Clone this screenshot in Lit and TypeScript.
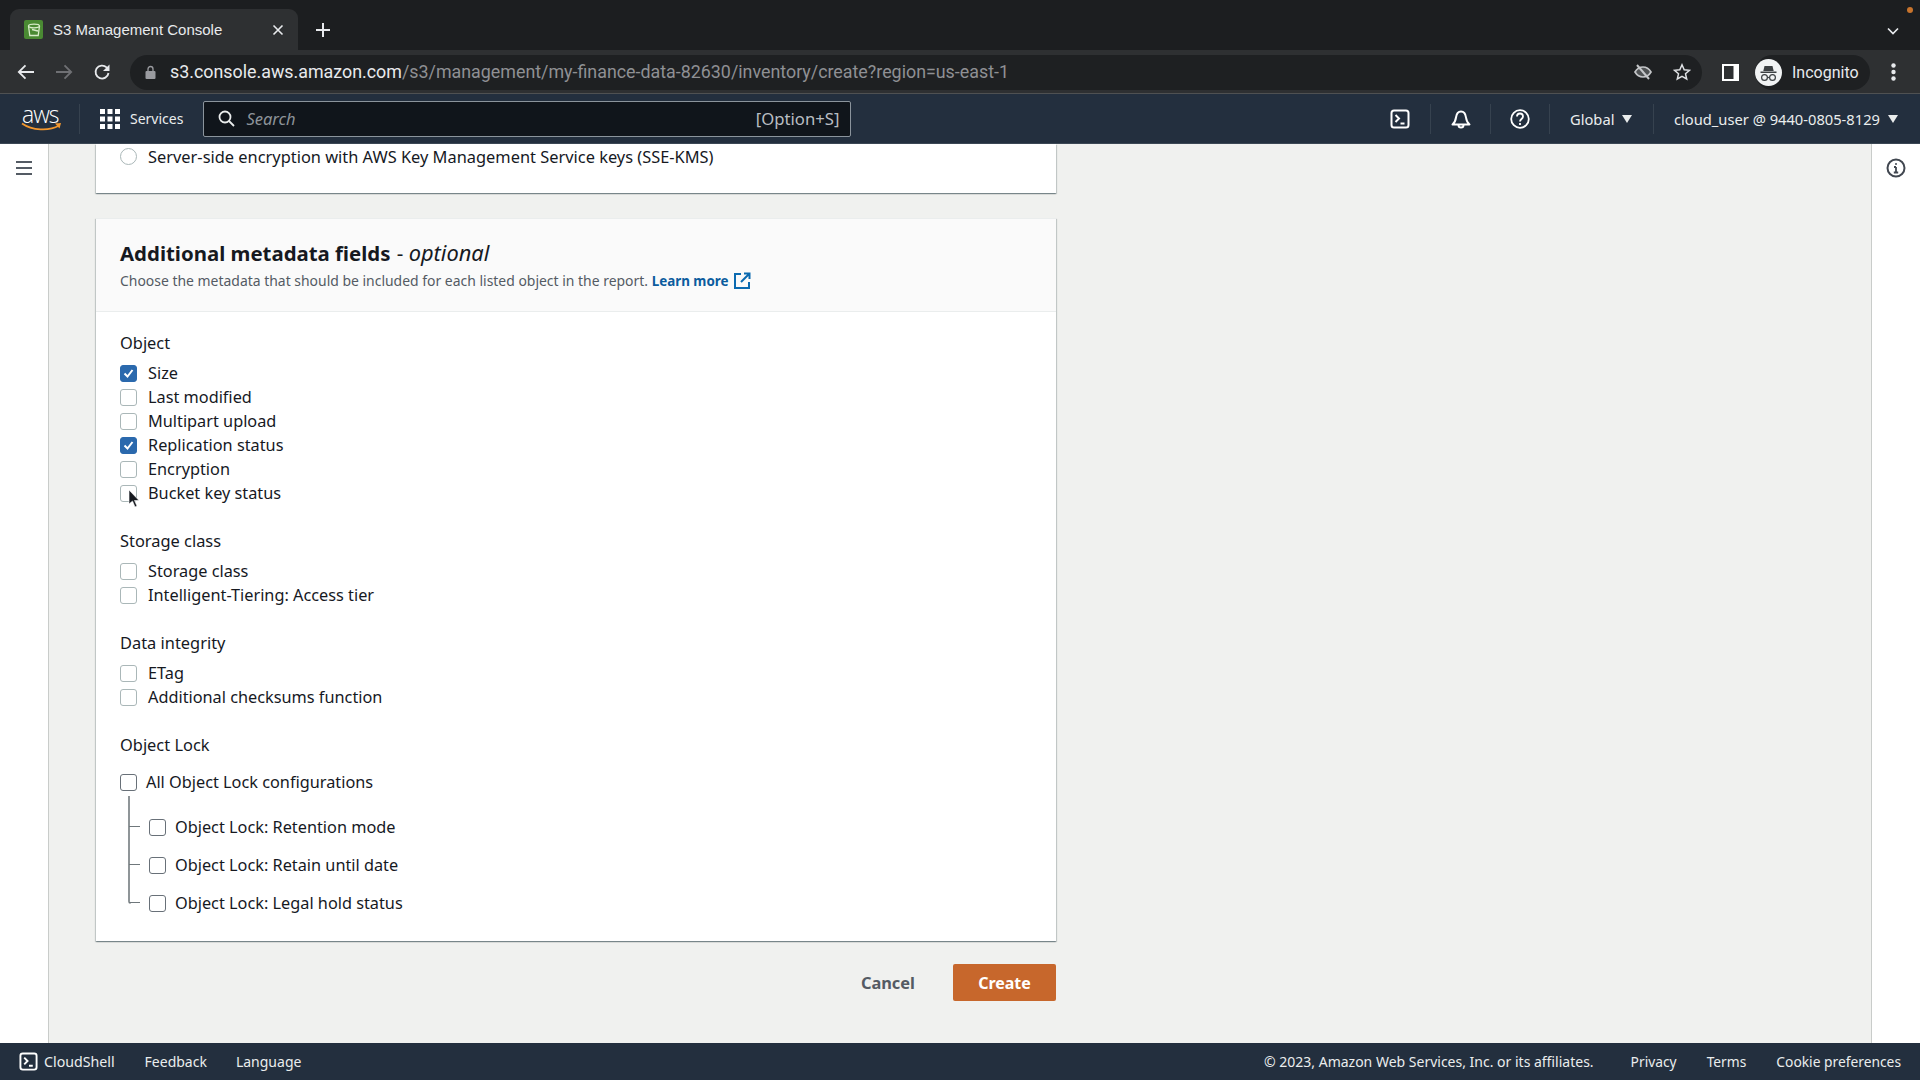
import { LitElement, html, css, svg } from "lit";
import { customElement } from "lit/decorators.js";

const groups = [
  { title: "Object", rows: [["Size", true], ["Last modified", false], ["Multipart upload", false], ["Replication status", true], ["Encryption", false], ["Bucket key status", false]] },
  { title: "Storage class", rows: [["Storage class", false], ["Intelligent-Tiering: Access tier", false]] },
  { title: "Data integrity", rows: [["ETag", false], ["Additional checksums function", false]] },
];
const lockRows = ["Object Lock: Retention mode", "Object Lock: Retain until date", "Object Lock: Legal hold status"];

const shell = (s: number) => html`<svg width=${s} height=${s} viewBox="0 0 20 20" fill="none" stroke="#fff" stroke-width="2"><rect x="1.500" y="1.500" width="17" height="17" rx="2.500"/><path d="M5.500 6l3.500 3.500-3.500 3.500M10.500 14.500h4"/></svg>`;

@customElement("app-root")
export class AppRoot extends LitElement {
  static styles = css`
    :host { display: flex; flex-direction: column; height: 1080px; width: 1920px; overflow: hidden; position: relative;
      font-family: "Noto Sans", "Liberation Sans", sans-serif; color: #16191f; background: #f0f1ef; }
    svg { display: block; flex: none; }
    .tabstrip { height: 50px; background: #1c1e20; display: flex; align-items: flex-end; position: relative; flex: none; }
    .tab { margin-left: 10px; width: 288px; height: 41px; background: #2e3032; border-radius: 9px 9px 0 0; display: flex; align-items: center; padding-left: 14px; box-sizing: border-box; color: #e8eaed; font: 15px "Liberation Sans", sans-serif; }
    .favicon { width: 19px; height: 19px; background: #4a8a33; border-radius: 2px; display: flex; align-items: center; justify-content: center; margin-right: 10px; }
    .tab .x { margin-left: 50px; }
    .plus { margin-left: 17px; align-self: flex-end; margin-bottom: 12px; }
    .strip-chev { position: absolute; left: 1887px; top: 27px; }
    .dot { position: absolute; left: 1907px; top: 7px; width: 6px; height: 6px; border-radius: 50%; background: #c8742c; }
    .toolbar { height: 44px; background: #2e3032; border-bottom: 1px solid #4f5152; box-sizing: border-box; padding: 1px 0 0 7px; display: flex; align-items: center; flex: none; }
    .tb-btn { width: 38px; display: flex; justify-content: center; }
    .omni { margin-left: 9px; width: 1572px; height: 35px; border-radius: 18px; background: #1e2022; display: flex; align-items: center; padding-left: 15px; box-sizing: border-box; font: 17.85px/33px Roboto, sans-serif; color: #8f9094; }
    .omni b { font-weight: 400; color: #e8eaed; }
    .omni .url { margin-bottom: 2px; }
    .omni .lock { margin-right: 14px; }
    .omni .spacer { flex: 1; }
    .omni .eye { margin-right: 21px; }
    .omni .star { margin-right: 11px; }
    .panel-ic { margin-left: 20px; }
    .chip { margin-left: 16px; width: 115px; height: 35px; border-radius: 18px; background: #1e2022; display: flex; align-items: center; color: #e8eaed; font: 16px Roboto, sans-serif; box-sizing: border-box; gap: 10px; }
    .avatar { width: 27px; height: 27px; }
    .kebab { margin-left: 21px; }
    .nav { height: 49px; background: #232f3e; display: flex; align-items: center; color: #eaeded; font-size: 14px; flex: none; position: relative; }
    .logo { width: 38px; margin-left: 22px; position: relative; height: 26px; color: #fff; }
    .logo span { display: block; font: 300 23px/17px "Open Sans", sans-serif; letter-spacing: -1px; }
    .logo svg { position: absolute; left: -1px; top: 16px; }
    .vd { width: 1px; height: 30px; background: #36424f; flex: none; }
    .vd.first { margin-left: 19px; }
    .grid { margin: 0 10px 0 20px; }
    .search { margin-left: 20px; width: 648px; height: 36px; background: #10151b; border: 1px solid #8b949c; border-radius: 2px; box-sizing: border-box; display: flex; align-items: center; padding: 0 11px 0 14px; color: #8d9399; }
    .search i { margin-left: 11px; flex: 1; font-size: 16.5px; }
    .search span { font-size: 16.7px; color: #b8bdc2; }
    .nav-right { margin-left: auto; display: flex; align-items: center; height: 30px; }
    .nslot { display: flex; align-items: center; justify-content: center; height: 30px; }
    .nslot.txt { justify-content: flex-start; padding-left: 20px; box-sizing: border-box; }
    .w60 { width: 60px; } .w59 { width: 59px; } .w58 { width: 58px; } .w103 { width: 103px; } .w243 { width: 243px; }
    .end { width: 23px; }
    .nav-txt { font-size: 14.7px; color: #eaeded; white-space: nowrap; }
    .nav-txt.svc { font-size: 14px; }
    .tri { width: 0; height: 0; border-left: 5px solid transparent; border-right: 5px solid transparent; border-top: 8px solid #eaeded; margin-left: 8px; }
    .work { flex: 1; display: flex; min-height: 0; border-top: 1px solid #3b4754; }
    .side { width: 48px; background: #fff; border-right: 1px solid #c9ccca; flex: none; display: flex; justify-content: center; padding-top: 16px; }
    .main { flex: 1; padding: 0 0 0 47px; overflow: hidden; }
    .rail { width: 48px; background: #fff; border-left: 1px solid #c9ccca; flex: none; display: flex; justify-content: center; padding-top: 14px; }
    .col { width: 960px; }
    .card { background: #fff; box-shadow: 0 1px 1px 0 rgba(0,28,36,.3), 1px 1px 1px 0 rgba(0,28,36,.15), -1px 1px 1px 0 rgba(0,28,36,.15); }
    .card.next { margin-top: 25px; }
    .card.top { height: 49px; padding-left: 24px; box-sizing: border-box; display: flex; align-items: flex-start; }
    .card.top .row { font-size: 16.4px; }
    .radio { width: 15px; height: 15px; border: 1px solid #aab7b8; border-radius: 50%; margin-right: 11px; flex: none; }
    .hdr { background: #fafafa; border-top: 1px solid #eaeded; border-bottom: 1px solid #eaeded; height: 94px; box-sizing: border-box; padding: 21px 24px 0; }
    .title { font-size: 20.4px; line-height: 26px; font-weight: 700; white-space: nowrap; }
    .title span { font-weight: 400; margin-left: 1px; }
    .title em { font-weight: 400; font-size: 21.8px; }
    .desc { margin-top: 5px; font-size: 13.95px; line-height: 20px; color: #545b64; display: flex; align-items: center; white-space: pre; }
    .desc a { color: #0b5c9e; font-weight: 700; font-size: 13.4px; }
    .desc svg { margin-left: 5px; }
    .body { padding: 20px 24px 26px; }
    .group { margin-bottom: 25px; }
    .glabel { font-size: 16.4px; line-height: 22px; margin-bottom: 7px; }
    .row { display: flex; align-items: center; height: 24px; font-size: 16.3px; white-space: nowrap; }
    .cb { width: 17px; height: 17px; box-sizing: border-box; border: 1px solid #aab7b8; border-radius: 3px; background: #fff; margin-right: 11px; flex: none; display: flex; align-items: center; justify-content: center; }
    .cb.on { background: #2b69ad; border-color: #2b69ad; }
    .cb.dark { border-color: #687078; margin-right: 9px; }
    .lock-head { margin-top: 14px; }
    .subs { position: relative; margin-top: 21px; padding-left: 29px; display: flex; flex-direction: column; gap: 14px; }
    .subs::before { content: ""; position: absolute; left: 8px; top: -19px; bottom: 11px; width: 1px; border-left: 2px solid #8f9598; border-radius: 0 0 0 3px; }
    .subs .row { position: relative; }
    .subs .row::before { content: ""; position: absolute; left: -20px; top: 11px; width: 11px; height: 1px; background: #6f777b; }
    .actions { display: flex; justify-content: flex-end; align-items: center; margin-top: 23px; }
    .cancel { font-weight: 700; font-size: 16.4px; color: #545b64; margin-right: 38px; }
    .create { width: 103px; height: 37px; background: #c7672c; color: #fff; font-weight: 700; font-size: 16px; border-radius: 2px; display: flex; align-items: center; justify-content: center; }
    .footer { height: 37px; background: #232f3e; flex: none; display: flex; align-items: center; color: #eaeded; font-size: 14px; padding-left: 19px; white-space: nowrap; }
    .footer .cs { margin-left: 6px; font-size: 14.2px; }
    .footer .f1 { margin-left: 30px; }
    .footer .f2 { margin-left: 29px; }
    .footer .right { margin-left: auto; display: flex; gap: 30px; padding-right: 19px; font-size: 13.8px; }
    .footer .copy { margin-right: 7px; font-size: 14px; }
    .cursor { position: absolute; left: 128px; top: 489px; }
  `;

  private renderCb(on: boolean, dark = false) {
    return html`<span class="cb ${on ? "on" : ""} ${dark ? "dark" : ""}">${on ? html`<svg width="13" height="13" viewBox="0 0 13 13" fill="none" stroke="#fff" stroke-width="2"><path d="M2.500 6.500l3 3 5-6.500"/></svg>` : ""}</span>`;
  }

  render() {
    return html`
      <div class="tabstrip">
        <div class="tab">
          <span class="favicon"><svg width="14" height="14" viewBox="0 0 14 14" fill="none" stroke="#d7ecc9" stroke-width="1.300"><ellipse cx="7" cy="3" rx="5.500" ry="1.800"/><path d="M1.500 3l1.300 9.500h8.400L12.500 3M5 6.500l6 1.500"/></svg></span>
          <span>S3 Management Console</span>
          <svg class="x" width="12" height="12" viewBox="0 0 12 12" stroke="#e8eaed" stroke-width="1.600"><path d="M1.500 1.500l9 9M10.500 1.500l-9 9"/></svg>
        </div>
        <svg class="plus" width="16" height="16" viewBox="0 0 16 16" stroke="#e8eaed" stroke-width="2"><path d="M8 1v14M1 8h14"/></svg>
        <svg class="strip-chev" width="12" height="8" viewBox="0 0 12 8" fill="none" stroke="#e8eaed" stroke-width="1.700"><path d="M1 1.500l5 5 5-5"/></svg>
        <span class="dot"></span>
      </div>
      <div class="toolbar">
        <span class="tb-btn"><svg width="18" height="16" viewBox="0 0 18 16" fill="none" stroke="#e8eaed" stroke-width="1.800"><path d="M17 8H2M8.500 1.300L1.800 8l6.700 6.700"/></svg></span>
        <span class="tb-btn"><svg width="18" height="16" viewBox="0 0 18 16" fill="none" stroke="#6f7074" stroke-width="1.800"><path d="M1 8h15M9.500 1.300L16.200 8l-6.700 6.700"/></svg></span>
        <span class="tb-btn"><svg width="18" height="18" viewBox="0 0 18 18" fill="none" stroke="#e8eaed" stroke-width="1.800"><path d="M15.500 10a6.500 6.500 0 1 1-1.900-5.600L15.500 6.500"/><path d="M16.500 1.500v6.500h-6.500z" stroke="none" fill="#e8eaed"/></svg></span>
        <div class="omni">
          <svg class="lock" width="11" height="14" viewBox="0 0 11 14"><path d="M3 6V4a2.500 2.500 0 0 1 5 0v2" fill="none" stroke="#9a9ba0" stroke-width="1.300"/><rect x="0.500" y="6" width="10" height="8" rx="1" fill="#9a9ba0"/></svg>
          <span class="url"><b>s3.console.aws.amazon.com</b>/s3/management/my-finance-data-82630/inventory/create?region=us-east-1</span>
          <span class="spacer"></span>
          <svg class="eye" width="18" height="18" viewBox="0 0 18 18" fill="none" stroke="#c4c6c9" stroke-width="1.700"><path d="M1 9s3-5 8-5 8 5 8 5-3 5-8 5-8-5-8-5z" fill="#c4c6c9" fill-opacity=".3"/><path d="M3 2l12 14" stroke-width="2"/></svg>
          <svg class="star" width="18" height="18" viewBox="0 0 18 18" fill="none" stroke="#dfe1e4" stroke-width="1.500"><path d="M9 1.800l2.200 4.900 5.300.6-4 3.500 1.200 5.200L9 13.300 4.300 16l1.200-5.200-4-3.500 5.300-.6z"/></svg>
        </div>
        <svg class="panel-ic" width="17" height="17" viewBox="0 0 17 17"><rect width="17" height="17" fill="#fff"/><rect x="2" y="2" width="9.500" height="13" fill="#2e3032"/></svg>
        <div class="chip">
          <svg class="avatar" viewBox="0 0 27 27"><circle cx="13.500" cy="13.500" r="13.500" fill="#f1f3f4"/><path d="M5.500 12.500h16v1.400h-16zM9.500 7h8l1.200 5H8.300z" fill="#3c4043"/><circle cx="9.500" cy="18.500" r="2.900" fill="none" stroke="#3c4043" stroke-width="1.200"/><circle cx="17.500" cy="18.500" r="2.900" fill="none" stroke="#3c4043" stroke-width="1.200"/><path d="M12.400 18.500h2.200" stroke="#3c4043" stroke-width="1.200"/></svg>
          <span>Incognito</span>
        </div>
        <svg class="kebab" width="5" height="18" viewBox="0 0 5 18" fill="#e8eaed"><circle cx="2.500" cy="2.500" r="2.200"/><circle cx="2.500" cy="9" r="2.200"/><circle cx="2.500" cy="15.500" r="2.200"/></svg>
      </div>
      <div class="nav">
        <div class="logo"><span>aws</span><svg width="41" height="10" viewBox="0 0 41 10" fill="none"><path d="M1 1.500c10 7 27 8 37 2" stroke="#f2972e" stroke-width="1.800"/><path d="M34 1.500l6-.5-1.500 5.500z" fill="#f2972e"/></svg></div>
        <span class="vd first"></span>
        <svg class="grid" width="20" height="20" viewBox="0 0 20 20" fill="#fff">
          ${[0, 7.5, 15].flatMap((y) => [0, 7.5, 15].map((x) => svg`<rect x=${x} y=${y} width="5" height="5"/>`))}
        </svg>
        <span class="nav-txt svc">Services</span>
        <div class="search">
          <svg width="17" height="17" viewBox="0 0 17 17" fill="none" stroke="#eaeded" stroke-width="1.800"><circle cx="7" cy="7" r="5.500"/><path d="M11 11l5 5"/></svg>
          <i>Search</i><span>[Option+S]</span>
        </div>
        <div class="nav-right">
          <span class="nslot w60">${shell(20)}</span>
          <span class="vd"></span>
          <span class="nslot w59"><svg width="20" height="20" viewBox="0 0 20 20" fill="none" stroke="#fff" stroke-width="2"><path d="M1.500 15.500c2.500-2 3-3.500 3.500-7C5.500 4.500 7.500 2.500 10 2.500s4.500 2 5 6c.5 3.500 1 5 3.500 7z" stroke-linejoin="round"/><path d="M7.500 16a2.500 2.500 0 0 0 5 0"/></svg></span>
          <span class="vd"></span>
          <span class="nslot w58"><svg width="20" height="20" viewBox="0 0 20 20" fill="none" stroke="#fff" stroke-width="1.800"><circle cx="10" cy="10" r="8.800"/><path d="M7 7.500c0-4 6-4 6 0 0 2.500-3 2.500-3 5"/><path d="M10 14v2"/></svg></span>
          <span class="vd"></span>
          <span class="nslot txt w103"><span class="nav-txt">Global</span><span class="tri"></span></span>
          <span class="vd"></span>
          <span class="nslot txt w243"><span class="nav-txt">cloud_user @ 9440-0805-8129</span><span class="tri"></span></span>
          <span class="end"></span>
        </div>
      </div>
      <div class="work">
        <div class="side"><svg width="18" height="16" viewBox="0 0 18 16" stroke="#545b64" stroke-width="2"><path d="M1 2h16M1 8h16M1 14h16"/></svg></div>
        <div class="main">
          <div class="col">
            <div class="card top"><div class="row"><span class="radio"></span>Server-side encryption with AWS Key Management Service keys (SSE-KMS)</div></div>
            <div class="card next">
              <div class="hdr">
                <div class="title">Additional metadata fields <span>- <em>optional</em></span></div>
                <div class="desc">Choose the metadata that should be included for each listed object in the report. <a>Learn more</a><svg width="18" height="18" viewBox="0 0 18 18" fill="none" stroke="#0b6ab0" stroke-width="2"><path d="M8 2H2v14h14v-6"/><path d="M11 1.500h5.500V7M16 2L8 10"/></svg></div>
              </div>
              <div class="body">
                ${groups.map((g) => html`<div class="group"><div class="glabel">${g.title}</div>
                  ${g.rows.map((r) => html`<div class="row">${this.renderCb(r[1] as boolean)}${r[0]}</div>`)}</div>`)}
                <div class="glabel">Object Lock</div>
                <div class="row lock-head">${this.renderCb(false, true)}All Object Lock configurations</div>
                <div class="subs">${lockRows.map((t) => html`<div class="row">${this.renderCb(false, true)}${t}</div>`)}</div>
              </div>
            </div>
            <div class="actions"><span class="cancel">Cancel</span><span class="create">Create</span></div>
          </div>
        </div>
        <div class="rail"><svg width="20" height="20" viewBox="0 0 20 20" fill="none" stroke="#414750" stroke-width="2"><circle cx="10" cy="10" r="8.500"/><path d="M10 9v5.500M7.800 14.500h4.400M8 9h2" stroke-width="1.800"/><circle cx="10" cy="6" r="1" fill="#414750" stroke="none"/></svg></div>
      </div>
      <div class="footer">
        ${shell(19)}
        <span class="cs">CloudShell</span><span class="f1">Feedback</span><span class="f2">Language</span>
        <div class="right"><span class="copy">© 2023, Amazon Web Services, Inc. or its affiliates.</span><span>Privacy</span><span>Terms</span><span>Cookie preferences</span></div>
      </div>
      <svg class="cursor" width="12" height="19" viewBox="0 0 12 19"><path d="M1 1v14l3.500-3 2.500 6 2-1-2.500-5.500H11z" fill="#16191f" stroke="#fff" stroke-width=".6"/></svg>
    `;
  }
}
